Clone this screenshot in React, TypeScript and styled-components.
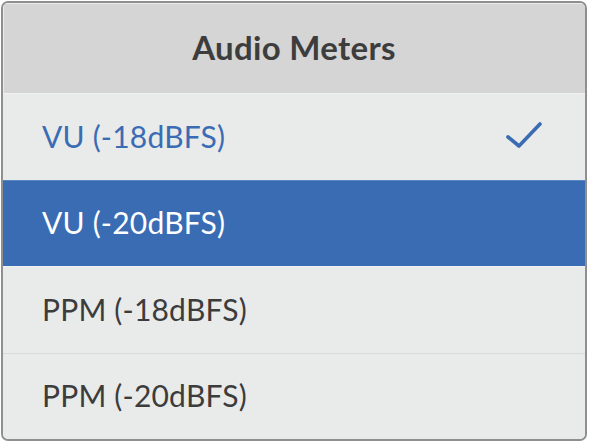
import React from "react";
import styled, { createGlobalStyle } from "styled-components";

const Global = createGlobalStyle`
  html, body { margin: 0; padding: 0; background: #ffffff; }
  body { font-family: Lato, "Open Sans", sans-serif; }
`;

const Page = styled.div`
  padding: 1px 3px 0 1px;
`;

const Card = styled.div`
  width: 582px;
  height: 436px;
  border: 2px solid #8f8f8f;
  border-radius: 7px;
  overflow: hidden;
  background: #e9eaea;
  display: flex;
  flex-direction: column;
`;

const Header = styled.div`
  height: 90px;
  flex: 0 0 90px;
  padding-bottom: 3px;
  box-sizing: border-box;
  background: #d5d5d5;
  display: flex;
  align-items: center;
  justify-content: center;
  color: #3d3d3d;
  font-size: 33px;
  font-weight: 700;
  letter-spacing: 0.3px;
  box-shadow: inset 1px 1px 0 rgba(255, 255, 255, 0.5);
`;

const Row = styled.div<{ $active?: boolean; $checked?: boolean; $divider?: boolean }>`
  flex: 1 1 0;
  display: flex;
  align-items: center;
  justify-content: space-between;
  padding: 0 42px 2px 39px;
  font-size: 30px;
  font-weight: 400;
  letter-spacing: 0.2px;
  background: ${(p) => (p.$active ? "#3a6cb4" : "#e9eaea")};
  color: ${(p) => (p.$active ? "#ffffff" : p.$checked ? "#3a6cb4" : "#3c3c3c")};
  border-top: 1px solid ${(p) => (p.$divider ? "#d9dada" : p.$active ? "#5a86c4" : "#f1f2f2")};
`;

const Check = () => (
  <svg width="38" height="30" viewBox="0 0 38 30">
    <path d="M3 16 L14 25 L35 3" fill="none" stroke="#3a6cb4" strokeWidth="3.6" strokeLinecap="round" strokeLinejoin="round" />
  </svg>
);

const items = [
  { label: "VU (-18dBFS)", checked: true },
  { label: "VU (-20dBFS)", active: true },
  { label: "PPM (-18dBFS)" },
  { label: "PPM (-20dBFS)", divider: true },
];

export default function App() {
  return (
    <>
      <Global />
      <Page>
        <Card>
          <Header>Audio Meters</Header>
          {items.map((it) => (
            <Row key={it.label} $active={it.active} $checked={it.checked} $divider={it.divider}>
              <span>{it.label}</span>
              {it.checked && <Check />}
            </Row>
          ))}
        </Card>
      </Page>
    </>
  );
}
